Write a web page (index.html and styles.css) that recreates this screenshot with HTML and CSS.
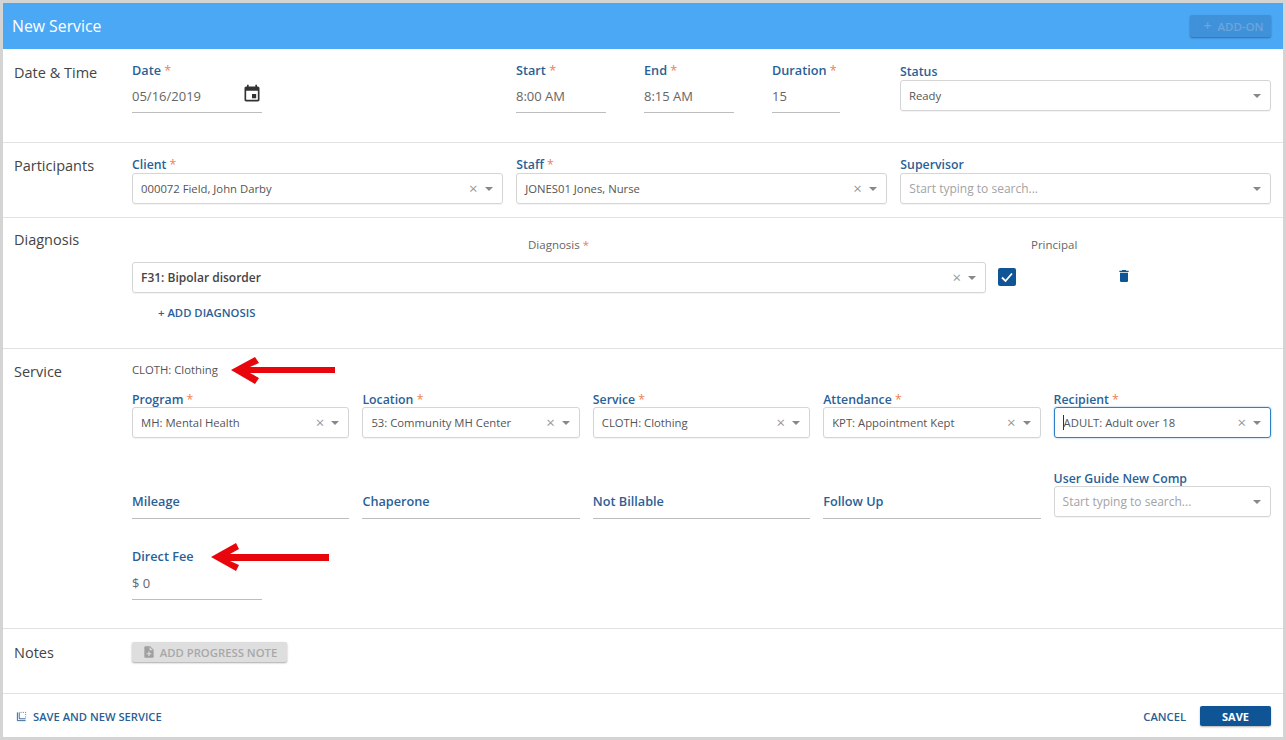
FILE: index.html
```html
<!DOCTYPE html>
<html lang="en">
<head>
  <meta charset="UTF-8">
  <title>New Service</title>
  <link rel="stylesheet" href="styles.css">
</head>
<body>

<div class="window">
  <div class="title-bar">
    <span class="title">New Service</span>
    <button class="add-on"><span class="plus">+</span> ADD-ON</button>
  </div>

  <!-- Date & Time -->
  <section class="section date-section">
    <h2>Date &amp; Time</h2>
    <div class="date-row">
      <div class="field w-date">
        <label>Date <i>*</i></label>
        <div class="line-input">05/16/2019
          <svg class="cal-icon" viewBox="0 0 24 24"><path d="M17 12h-5v5h5v-5zM16 1v2H8V1H6v2H5c-1.11 0-1.99.9-1.99 2L3 19c0 1.1.89 2 2 2h14c1.1 0 2-.9 2-2V5c0-1.1-.9-2-2-2h-1V1h-2zm3 18H5V8h14v11z"/></svg>
        </div>
      </div>
      <div class="field w-time">
        <label>Start <i>*</i></label>
        <div class="line-input">8:00 AM</div>
      </div>
      <div class="field w-time">
        <label>End <i>*</i></label>
        <div class="line-input">8:15 AM</div>
      </div>
      <div class="field w-duration">
        <label>Duration <i>*</i></label>
        <div class="line-input">15</div>
      </div>
      <div class="field w-status">
        <label class="tight">Status</label>
        <div class="select"><span class="value">Ready</span><b class="caret"></b></div>
      </div>
    </div>
  </section>

  <!-- Participants -->
  <section class="section participants-section">
    <h2>Participants</h2>
    <div class="grid-3">
      <div class="field">
        <label class="tight">Client <i>*</i></label>
        <div class="select"><span class="value">000072 Field, John Darby</span><span class="clear">×</span><b class="caret"></b></div>
      </div>
      <div class="field">
        <label class="tight">Staff <i>*</i></label>
        <div class="select"><span class="value">JONES01 Jones, Nurse</span><span class="clear">×</span><b class="caret"></b></div>
      </div>
      <div class="field">
        <label class="tight">Supervisor</label>
        <div class="select"><span class="value placeholder">Start typing to search...</span><b class="caret"></b></div>
      </div>
    </div>
  </section>

  <!-- Diagnosis -->
  <section class="section diagnosis-section">
    <h2>Diagnosis</h2>
    <div class="diagnosis-body">
      <div class="diag-head">
        <span class="diag-label">Diagnosis <i>*</i></span>
        <span class="principal-label">Principal</span>
      </div>
      <div class="diag-row">
        <div class="select diag-select"><span class="value strong">F31: Bipolar disorder</span><span class="clear">×</span><b class="caret"></b></div>
        <span class="checkbox">
          <svg viewBox="0 0 18 18"><path d="M4 9.5l3.5 3.5L14 5.5" fill="none" stroke="#fff" stroke-width="1.8"/></svg>
        </span>
        <svg class="trash" viewBox="0 0 24 24"><path d="M6 19c0 1.1.9 2 2 2h8c1.1 0 2-.9 2-2V7H6v12zM19 4h-3.5l-1-1h-5l-1 1H5v2h14V4z"/></svg>
      </div>
      <a class="add-diagnosis">+ ADD DIAGNOSIS</a>
    </div>
  </section>

  <!-- Service -->
  <section class="section service-section">
    <h2>Service</h2>
    <div class="service-body">
      <div class="service-name">CLOTH: Clothing</div>
      <div class="grid-5">
        <div class="field">
          <label class="tight">Program <i>*</i></label>
          <div class="select"><span class="value">MH: Mental Health</span><span class="clear">×</span><b class="caret"></b></div>
        </div>
        <div class="field">
          <label class="tight">Location <i>*</i></label>
          <div class="select"><span class="value">53: Community MH Center</span><span class="clear">×</span><b class="caret"></b></div>
        </div>
        <div class="field">
          <label class="tight">Service <i>*</i></label>
          <div class="select"><span class="value">CLOTH: Clothing</span><span class="clear">×</span><b class="caret"></b></div>
        </div>
        <div class="field">
          <label class="tight">Attendance <i>*</i></label>
          <div class="select"><span class="value">KPT: Appointment Kept</span><span class="clear">×</span><b class="caret"></b></div>
        </div>
        <div class="field">
          <label class="tight">Recipient <i>*</i></label>
          <div class="select focused"><span class="cursor"></span><span class="value">ADULT: Adult over 18</span><span class="clear">×</span><b class="caret"></b></div>
        </div>
      </div>
      <div class="grid-5 extras">
        <div class="toggle-field">Mileage</div>
        <div class="toggle-field">Chaperone</div>
        <div class="toggle-field">Not Billable</div>
        <div class="toggle-field">Follow Up</div>
        <div class="field">
          <label class="tight">User Guide New Comp</label>
          <div class="select"><span class="value placeholder">Start typing to search...</span><b class="caret"></b></div>
        </div>
      </div>
      <div class="field w-date fee-field">
        <label>Direct Fee</label>
        <div class="line-input fee-input">$ 0</div>
      </div>
    </div>
  </section>

  <!-- Notes -->
  <section class="section notes-section">
    <h2>Notes</h2>
    <button class="note-btn">
      <svg viewBox="0 0 24 24"><path d="M14 2H6c-1.1 0-1.99.9-1.99 2L4 20c0 1.1.89 2 1.99 2H18c1.1 0 2-.9 2-2V8l-6-6zm2 14h-3v3h-2v-3H8v-2h3v-3h2v3h3v2zm-3-7V3.5L18.5 9H13z"/></svg>
      ADD PROGRESS NOTE
    </button>
  </section>

  <div class="footer">
    <a class="save-new">
      <svg viewBox="0 0 12 12"><path d="M1.5 1.5v9h9M3.5 8.5h7M3.5 1.5v7" fill="none" stroke="#2a5f96" stroke-width="1"/><path d="M5 1.5h1M7.5 1.5h1M10 1.5h1M10.5 3.5v1M10.5 6v1" fill="none" stroke="#2a5f96" stroke-width="1"/></svg>
      SAVE AND NEW SERVICE
    </a>
    <div class="footer-right">
      <a class="cancel">CANCEL</a>
      <button class="save">SAVE</button>
    </div>
  </div>

  <!-- Red annotation arrows -->
  <svg class="arrow arrow-top" viewBox="0 0 104 28"><path d="M0 14L24 1l4 6-9 4h85v6H19l9 5-4 6z"/></svg>
  <svg class="arrow arrow-bottom" viewBox="0 0 118 28"><path d="M0 14L25 0l3 6-9 5h99v7H19l9 4-3 6z"/></svg>
</div>

</body>
</html>
```

FILE: styles.css
```css
* {
  box-sizing: border-box;
}

body {
  margin: 0;
  background: #d4d4d4;
  font-family: "Open Sans", Arial, sans-serif;
  color: #444;
}

.window {
  position: relative;
  width: 1280px;
  height: 734px;
  margin: 3px;
  background: #fff;
  overflow: hidden;
}

.title-bar {
  display: flex;
  align-items: center;
  justify-content: space-between;
  height: 46px;
  padding: 0 12px 0 9px;
  background: #4ba8f5;
}

.title {
  font-size: 15.8px;
  color: #fff;
}

.add-on {
  width: 81px;
  height: 22px;
  padding: 0 0 1px 6px;
  border: none;
  border-radius: 2px;
  background: #3f92da;
  box-shadow: 0 1px 2px rgba(0, 0, 0, 0.35);
  color: #6aa5dc;
  font-family: inherit;
  font-size: 11.5px;
  font-weight: 600;
}

.add-on .plus {
  font-size: 14px;
  margin-right: 3px;
}

/* Sections */
.section {
  display: flex;
  padding: 0 12px 0 11px;
  border-bottom: 1px solid #e2e2e2;
}

.section h2 {
  flex: 0 0 118px;
  margin: 0;
  font-size: 14.5px;
  font-weight: 500;
  line-height: 20px;
  color: #444;
}

.date-section { height: 94px; padding-top: 12px; }
.date-section h2,
.service-section h2,
.notes-section h2 { margin-top: 1px; }
.date-section h2 { margin-top: 2px; }
.participants-section { height: 75px; padding-top: 13px; }
.diagnosis-section { height: 131px; padding-top: 12px; }
.service-section { height: 280px; padding-top: 12px; }
.notes-section { height: 65px; padding-top: 13px; }

.date-row {
  display: flex;
  flex: 1;
}

.grid-3 {
  display: grid;
  flex: 1;
  grid-template-columns: repeat(3, 1fr);
  column-gap: 13.5px;
  align-content: start;
}

.grid-5 {
  display: grid;
  grid-template-columns: repeat(5, 1fr);
  column-gap: 13px;
}

.w-date { width: 130px; margin-right: 254px; }
.w-time { width: 90px; margin-right: 38px; }
.w-duration { width: 68px; margin-right: 60px; }
.w-status { flex: 1; }

/* Fields */
.field label {
  display: block;
  height: 18px;
  font-size: 12.7px;
  font-weight: 600;
  line-height: 18px;
  color: #2a5f96;
}

.field label.tight {
  height: 17px;
  font-size: 12.3px;
  line-height: 18px;
}

.date-section .field label.tight {
  height: 17px;
  margin-top: 2px;
}

.field i,
.diag-label i {
  font-style: normal;
  font-weight: 500;
  color: #ee8055;
}

.line-input {
  position: relative;
  height: 34px;
  padding-top: 8px;
  border-bottom: 1px solid #bdbdbd;
  font-size: 13px;
  line-height: 18px;
  color: #666;
}

.cal-icon {
  position: absolute;
  top: 5px;
  left: 110px;
  width: 20px;
  height: 20px;
  fill: #333;
}

.select {
  position: relative;
  display: flex;
  align-items: center;
  height: 31px;
  padding: 0 10px 0 8px;
  border: 1px solid #d5d5d5;
  border-radius: 3px;
  box-shadow: 0 1px 1px rgba(0, 0, 0, 0.05);
  font-size: 11.3px;
}

.value {
  flex: 1;
  white-space: nowrap;
  color: #555;
}

.placeholder {
  font-size: 12px;
  color: #a3a3a3;
}

.strong {
  font-size: 12px;
  font-weight: 600;
  color: #444;
}

.clear {
  margin-right: 7px;
  font-size: 15px;
  line-height: 15px;
  color: #9a9a9a;
}

.caret {
  width: 0;
  height: 0;
  margin-right: -1px;
  border-top: 4px solid #888;
  border-left: 4px solid transparent;
  border-right: 4px solid transparent;
}

.focused {
  border-color: #2f7fc4;
  box-shadow: 0 0 2px rgba(47, 127, 196, 0.6);
}

.cursor {
  width: 1px;
  height: 15px;
  background: #333;
}

/* Diagnosis */
.diagnosis-body {
  flex: 1;
}

.diag-head {
  display: flex;
  height: 32px;
  padding-top: 7px;
  font-size: 11.5px;
  line-height: 16px;
  font-weight: 500;
  color: #666;
}

.diag-label {
  margin-left: 396px;
  width: 503px;
}

.diag-row {
  display: flex;
  align-items: center;
}

.diag-select {
  flex: 0 0 854px;
}

.checkbox {
  width: 18px;
  height: 18px;
  margin: -2px 0 0 12px;
  border-radius: 2px;
  background: #0f5595;
}

.checkbox svg {
  display: block;
}

.trash {
  width: 16px;
  height: 16px;
  margin: -3px 0 0 100px;
  fill: #0f5595;
}

.add-diagnosis {
  display: block;
  margin: 12px 0 0 26px;
  font-size: 11.3px;
  font-weight: 600;
  line-height: 16px;
  color: #2a5f96;
}

/* Service */
.service-body {
  flex: 1;
}

.service-name {
  height: 30px;
  padding-top: 1px;
  font-size: 11.3px;
  line-height: 16px;
  color: #555;
}

.service-section .grid-5 .field label {
  height: 16px;
}

.extras {
  margin-top: 32px;
}

.toggle-field {
  align-self: end;
  height: 33px;
  margin-bottom: -2px;
  padding-top: 6px;
  border-bottom: 1px solid #bdbdbd;
  font-size: 12.7px;
  font-weight: 600;
  line-height: 18px;
  color: #2a5f96;
}

.fee-field {
  margin-top: 30px;
}

.fee-input {
  height: 35px;
  padding-top: 9px;
}

/* Notes and footer */
.note-btn {
  display: flex;
  align-items: center;
  justify-content: center;
  gap: 4px;
  width: 155px;
  height: 20px;
  padding: 0;
  border: none;
  border-radius: 2px;
  background: #dedede;
  box-shadow: 0 1px 2px rgba(0, 0, 0, 0.35);
  font-family: inherit;
  font-size: 11.3px;
  font-weight: 600;
  color: #a8a8a8;
}

.note-btn svg {
  width: 14px;
  height: 14px;
  fill: #a0a0a0;
}

.footer {
  display: flex;
  align-items: center;
  justify-content: space-between;
  height: 43px;
  padding: 1px 12px 0 13px;
}

.save-new {
  display: flex;
  align-items: center;
  gap: 6px;
  font-size: 11.2px;
  font-weight: 600;
  color: #2a5f96;
}

.save-new svg {
  width: 11px;
  height: 11px;
}

.footer-right {
  display: flex;
  align-items: center;
  gap: 14px;
}

.cancel {
  font-size: 11.2px;
  font-weight: 600;
  color: #2a5f96;
}

.save {
  width: 71px;
  height: 20px;
  padding: 0;
  border: none;
  border-radius: 2px;
  background: #0f5595;
  box-shadow: 0 1px 2px rgba(0, 0, 0, 0.3);
  font-family: inherit;
  font-size: 11px;
  font-weight: 700;
  color: #fff;
}

/* Red arrows drawn on top of the form */
.arrow {
  position: absolute;
  fill: #e8060c;
}

.arrow-top {
  top: 353px;
  left: 228px;
  width: 104px;
  height: 28px;
}

.arrow-bottom {
  top: 540px;
  left: 208px;
  width: 118px;
  height: 28px;
}
```
